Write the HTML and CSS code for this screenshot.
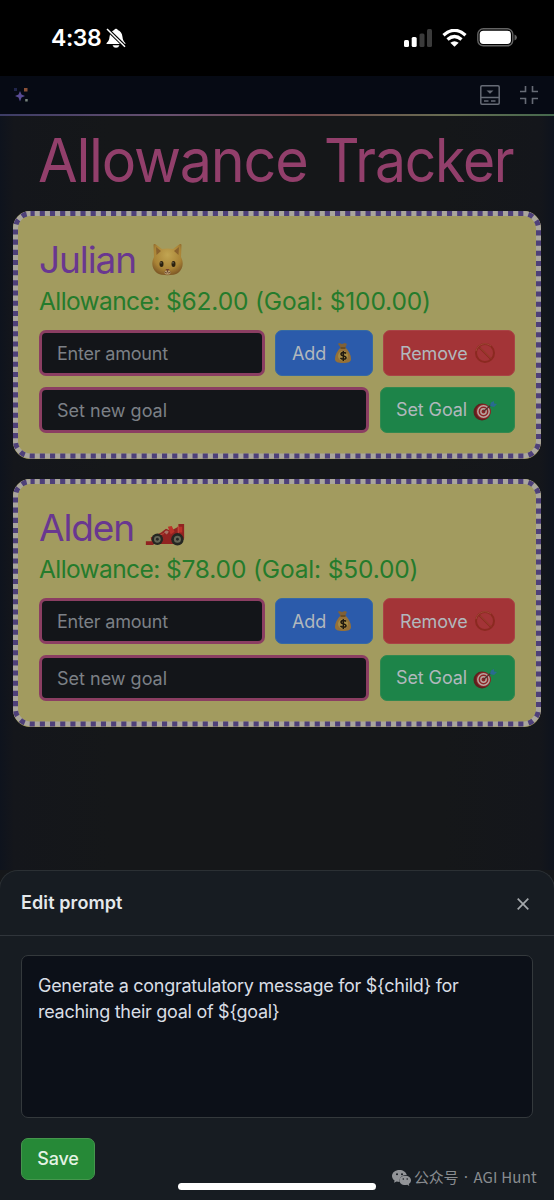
FILE: index.html
```
<!DOCTYPE html>
<html lang="en">
<head>
<meta charset="utf-8">
<title>Allowance Tracker</title>
<link rel="stylesheet" href="styles.css">
</head>
<body>
<svg class="defs" width="0" height="0" aria-hidden="true">
  <defs>
    <radialGradient id="fur" cx=".5" cy=".35" r=".7"><stop offset="0" stop-color="#c1a552"/><stop offset=".65" stop-color="#a98336"/><stop offset="1" stop-color="#765022"/></radialGradient>
    <symbol id="bag" viewBox="0 0 18 22">
      <path d="M5 1l3 1 3-1 2 1-2 4H7L4 2z" fill="#806137"/>
      <path d="M7 5C3 9 1 13 1 17c0 3 3 4 8 4s8-1 8-4c0-4-2-8-6-12z" fill="#957038"/>
      <path d="M6.500 6h5" stroke="#5b421d" stroke-width="1.500"/>
      <circle cx="9" cy="14" r="5" fill="#a68b45"/>
      <path d="M12 11.500c-1-1.500-5-1.500-5 .7 0 2.300 5 1 5 3.500 0 2-4.500 2-5.500.2M9.300 9v10" fill="none" stroke="#20190f" stroke-width="1.500"/>
    </symbol>
    <symbol id="ban" viewBox="0 0 22 22">
      <circle cx="11" cy="11" r="9" fill="none" stroke="#8b2920" stroke-width="2"/>
      <path d="M5 5l12 12" stroke="#8b2920" stroke-width="2"/>
      <path d="M2 9a9.200 9.200 0 0 1 15-5M6 5.500l11 11" fill="none" stroke="#a5543c" stroke-width=".7"/>
    </symbol>
    <symbol id="target" viewBox="0 0 24 20">
      <circle cx="9" cy="11" r="8.500" fill="#5e201f"/>
      <circle cx="10.500" cy="10.500" r="7.500" fill="#8e2526"/>
      <circle cx="10.500" cy="10.500" r="5.700" fill="none" stroke="#b7a8a2" stroke-width="1.500"/>
      <circle cx="10.500" cy="10.500" r="2.700" fill="none" stroke="#b7a8a2" stroke-width="1.400"/>
      <path d="M10.500 10.500L18 4" stroke="#4d302e" stroke-width="1.200"/>
      <path d="M17 5l1-3.500L21 0v2.500l3 .5-3 3z" fill="#296b91"/>
    </symbol>
    <symbol id="cat" viewBox="0 0 31 34">
      <path d="M1.500 2c0-1 1-1.500 2-.7l6.500 4.700c3-.7 8-.7 11 0l6.500-4.700c1-.8 2-.3 2 .7L29 14c3 6 2 12-3 16-4 3-17 3-21 0-5-4-6-10-3-16z" fill="url(#fur)"/>
      <path d="M4 4l5 4-4.500 4zM27 4l-5 4 4.500 4z" fill="#8a622d"/>
      <ellipse cx="9.500" cy="21" rx="2" ry="3" fill="#29200f"/><ellipse cx="21.500" cy="21" rx="2" ry="3" fill="#29200f"/>
      <circle cx="9" cy="19.800" r=".6" fill="#b5a98b"/><circle cx="21" cy="19.800" r=".6" fill="#b5a98b"/>
      <ellipse cx="15.500" cy="29.500" rx="3" ry="2" fill="#b69c71"/>
      <path d="M13.300 26h4.400l-2.200 2.200z" fill="#713e2e"/><path d="M15.500 27.500v1.500m-3 0q2 2 3 0 1 2 3 0" fill="none" stroke="#69442c" stroke-width=".9"/>
    </symbol>
    <symbol id="car" viewBox="0 0 40 23">
      <path d="M0 18h8v4H0zM5 14l11-5 5-4 5 2 8-4V0h6v15l-4 6H7z" fill="#912321"/>
      <path d="M33 3h5v6h-5zM23 3l4-1 3 6-4 3z" fill="#ba3128"/>
      <path d="M19 9q2-4 5-1l-2 3z" fill="#a77364"/><path d="M7 14l12-4M34 2v8" stroke="#b84b3e" stroke-width="1"/>
      <circle cx="12" cy="16" r="6" fill="#252722"/><circle cx="12" cy="16" r="3.500" fill="#656657"/><circle cx="12" cy="16" r="1.500" fill="#272825"/>
      <circle cx="33" cy="16" r="6.500" fill="#252722"/><circle cx="33" cy="16" r="3.700" fill="#656657"/><circle cx="33" cy="16" r="1.500" fill="#272825"/>
    </symbol>
  </defs>
</svg>
<div class="phone">
  <header class="status">
    <div class="clock"><span class="time">4:38</span>
      <svg width="20" height="20" viewBox="0 0 20 20"><path d="M.5 16c0-2 2.500-2 3-7C4 5 5.500 3 8.200 2a2 2 0 0 1 3.600 0C14.500 3 16 5 16.500 9c.5 5 3 5 3 7zM6.500 17.200h7q-1 2.500-3.500 2.500t-3.500-2.500z" fill="#fff"/><path d="M.5.500L19.500 19" stroke="#000" stroke-width="3.600"/><path d="M1 1L19 18.800" stroke="#fff" stroke-width="1.500"/></svg>
    </div>
    <div class="signals">
      <svg width="28" height="18" viewBox="0 0 28 18"><rect x="0" y="11" width="5" height="7" rx="1.500" fill="#fff"/><rect x="7.700" y="8" width="5" height="10" rx="1.500" fill="#fff"/><rect x="15.500" y="4.500" width="5" height="13.500" rx="1.500" fill="#3b3b3b"/><rect x="23" y="0" width="5" height="18" rx="1.500" fill="#3b3b3b"/></svg>
      <svg width="25" height="18" viewBox="0 0 25 18"><path d="M1.500 6.200Q12.500-3.500 23.500 6.200M5.500 10.500q7-6 14 0" fill="none" stroke="#fff" stroke-width="3.300"/><path d="M8.300 13.800q4.200-3.300 8.400 0L12.500 17.700z" fill="#fff"/></svg>
      <svg width="40" height="19" viewBox="0 0 40 19"><rect x=".8" y=".8" width="35" height="17" rx="5.500" fill="none" stroke="#636363" stroke-width="1.400"/><rect x="2.700" y="2.700" width="31.200" height="13.200" rx="3.700" fill="#fff"/><path d="M37.500 6.500q2.500 1 2.500 3t-2.500 3z" fill="#636363"/></svg>
    </div>
  </header>
  <nav class="toolbar">
    <svg width="17" height="17" viewBox="0 0 17 17"><path d="M7 4l1.500 3.500L12 9l-3.500 1.500L7 14.500l-1.500-4L2 9l3.500-1.500z" fill="#594b94"/><path d="M1 1h3v3H1z" fill="#20254b"/><path d="M11 1h3.500v3.500H11z" fill="#8a5037"/><path d="M12.200 12h2.500v2.500h-2.500z" fill="#77837c"/></svg>
    <div class="tools">
      <svg width="20" height="20" viewBox="0 0 20 20" fill="none" stroke="#666b75" stroke-width="1.500"><rect x=".8" y=".8" width="18.400" height="18.400" rx="1.200"/><path d="M1 12.500h18M4 16h4.500m2.500 0h4.500"/><path d="M6.500 5.500h7L10 8.700z" fill="#666b75" stroke="none"/></svg>
      <svg width="18" height="18" viewBox="0 0 18 18" fill="none" stroke="#666b75" stroke-width="1.600"><path d="M5.500 0v5.500H0M12.500 0v5.500H18M5.500 18v-5.500H0M12.500 18v-5.500H18"/></svg>
    </div>
  </nav>
  <main class="app">
    <h1 class="title"><span class="word-allowance">Allowance</span> <span class="word-tracker">Tracker</span></h1>
    <section class="card">
      <svg class="edge" width="528" height="248"><rect class="edge-base" x="2.500" y="2.500" width="523" height="242.500" rx="15"/><rect class="edge-dash" x="2.500" y="2.500" width="523" height="242.500" rx="15"/></svg>
      <h2 class="name"><span class="julian">Julian</span><svg width="31" height="34"><use href="#cat"/></svg></h2>
      <p class="balance">Allowance: <span class="figures">$62.00 (Goal: $100.00)</span></p>
      <div class="row"><div class="field amount">Enter amount</div><div class="btn add">Add<svg width="18" height="22"><use href="#bag"/></svg></div><div class="btn remove">Remove<svg width="22" height="22"><use href="#ban"/></svg></div></div>
      <div class="row"><div class="field">Set new goal</div><div class="btn goal">Set Goal<svg width="24" height="20"><use href="#target"/></svg></div></div>
    </section>
    <section class="card">
      <svg class="edge" width="528" height="248"><rect class="edge-base" x="2.500" y="2.500" width="523" height="242.500" rx="15"/><rect class="edge-dash" x="2.500" y="2.500" width="523" height="242.500" rx="15"/></svg>
      <h2 class="name"><span class="alden">Alden</span><svg class="racer" width="40" height="22"><use href="#car"/></svg></h2>
      <p class="balance">Allowance: <span class="figures">$78.00 (Goal: $50.00)</span></p>
      <div class="row"><div class="field amount">Enter amount</div><div class="btn add">Add<svg width="18" height="22"><use href="#bag"/></svg></div><div class="btn remove">Remove<svg width="22" height="22"><use href="#ban"/></svg></div></div>
      <div class="row"><div class="field">Set new goal</div><div class="btn goal">Set Goal<svg width="24" height="20"><use href="#target"/></svg></div></div>
    </section>
  </main>
  <section class="sheet">
    <header class="sheet-head"><span class="sheet-title">Edit prompt</span><svg width="12" height="12" viewBox="0 0 12 12"><path d="M.7.7l10.600 10.600M11.300.7L.7 11.300" stroke="#a4a8ac" stroke-width="1.700"/></svg></header>
    <div class="sheet-body">
      <div class="prompt">Generate a congratulatory message for ${child} for<br>reaching their goal of ${goal}</div>
      <div class="save">Save</div>
    </div>
  </section>
  <div class="home"></div>
  <div class="credit"><svg width="19" height="16" viewBox="0 0 19 16"><path d="M7.500 0C3.300 0 0 2.600 0 6c0 1.900 1 3.500 2.600 4.600L2 12.800l2.600-1.300q1.400.4 2.900.4C7 7.500 10.500 4.800 14.800 5 14 2 11 0 7.500 0z" fill="#929498"/><path d="M13.200 5.700c-3.300 0-5.700 2.100-5.700 4.700s2.400 4.700 5.700 4.700q1 0 2-.3l2.100 1.100-.5-1.900c1.300-.9 2.200-2.100 2.200-3.600 0-2.600-2.500-4.700-5.800-4.700z" fill="#929498"/><g fill="#171b22"><circle cx="5" cy="4.200" r="1"/><circle cx="10" cy="4.200" r="1"/><circle cx="11.300" cy="9" r=".8"/><circle cx="15.200" cy="9" r=".8"/></g></svg><span class="cn">公众号</span><span class="dot">·</span><span class="en">AGI Hunt</span></div>
</div>
</body>
</html>
```
FILE: styles.css
```
* { box-sizing: border-box; }
body { margin: 0; background: #15171a; font-family: Inter, "Noto Sans CJK SC", sans-serif; }
.defs { position: absolute; }
svg { display: block; flex: none; }
.phone { position: relative; width: 554px; height: 1200px; overflow: hidden; display: flex; flex-direction: column; }
.status { height: 76px; flex: none; background: #000; color: #fff; display: flex; justify-content: space-between; padding: 28px 37px 0 51px; }
.clock { display: flex; gap: 5px; height: 20px; align-items: center; }
.time { font-size: 23px; font-weight: 600; letter-spacing: -0.4px; line-height: 20px; }
.signals { display: flex; gap: 10px; height: 19px; align-items: center; }
.toolbar { height: 40px; flex: none; background: linear-gradient(90deg, #3c3c65, #67506f 30%, #71494d 55%, #686c52 80%, #45694d) bottom / 100% 2px no-repeat, #060a14; display: flex; justify-content: space-between; align-items: center; padding: 0 16px 2px 13px; }
.tools { display: flex; align-items: center; gap: 20px; }
.app { flex: none; height: 754px; padding: 0 13px; background: linear-gradient(90deg, #0e131d, #14161b 2.5%, #151719 20%, #151719 80%, #14161b 97.5%, #0e131d); }
.title { margin: 0 0 7px; height: 88px; line-height: 88px; font-size: 60.5px; font-weight: 400; color: #923f6b; letter-spacing: -1.3px; padding-left: 25px; white-space: nowrap; display: flex; }
.title span { flex: none; transform-origin: left; }
.word-allowance { width: 286px; transform: scaleX(.95); }
.word-tracker { width: 206px; transform: scaleX(.912); }
.card { position: relative; height: 247.5px; margin-bottom: 20.5px; border-radius: 17px; background: #a29b5f; padding: 28px 26px 0 26px; }
.edge { position: absolute; left: 0; top: 0; }
.edge rect { fill: none; stroke-width: 5px; }
.edge-base { stroke: #aaa69d; }
.edge-dash { stroke: #4e4079; stroke-dasharray: 5.09 5.09; stroke-dashoffset: .9px; }
.name { margin: 0; height: 41px; display: flex; align-items: center; font-size: 37px; font-weight: 400; line-height: 41px; color: #693790; white-space: nowrap; gap: 16px; }
.julian, .alden { letter-spacing: -1.1px; }
.alden + .racer { margin: 15px 0 0 -5px; }
.balance { margin: 0 0 8px; height: 42px; line-height: 42px; font-size: 24.5px; letter-spacing: -.6px; color: #257b2c; white-space: nowrap; }
.figures { letter-spacing: -.15px; }
.row { display: flex; gap: 10.5px; height: 46px; margin-bottom: 10.5px; }
.field { flex: 1; border: 3px solid #8b3e62; border-radius: 7px; background: #131519; color: #7c8086; padding-left: 15px; font-size: 18px; line-height: 41px; white-space: nowrap; }
.amount { letter-spacing: -.2px; }
.btn { border-radius: 7px; display: flex; align-items: center; justify-content: space-between; font-size: 18px; letter-spacing: -.1px; color: #b1b8bd; white-space: nowrap; }
.add { width: 97.5px; padding: 0 20px 0 16px; background: #2b5bab; border: 1px solid #3569a4; }
.remove { width: 132px; padding: 0 18px 0 16px; background: #a33437; border: 1px solid #a94346; }
.goal { width: 135.5px; padding: 0 17px 0 15.5px; background: #1d8449; border: 1px solid #32884f; }
.goal svg { margin-top: 3px; }
.sheet { flex: none; height: 330px; margin: 0 -1px; border: 1.5px solid #2b3034; border-bottom: 0; border-radius: 19px 19px 0 0; background: #171c22; }
.sheet-head { height: 65px; border-bottom: 1px solid #30353b; display: flex; align-items: center; justify-content: space-between; padding: 0 25px 0 21px; }
.sheet-title { font-size: 18px; font-weight: 600; color: #e4e8eb; letter-spacing: .1px; }
.sheet-head .sheet-title { margin-top: -2px; }
.sheet-head svg { margin-top: 2px; }
.sheet-body { padding: 19px 21px; }
.prompt { height: 163px; border: 1px solid #34393c; border-radius: 7px; background: #0c1018; color: #d9dee5; padding: 17px 16px; font-size: 18px; line-height: 26px; letter-spacing: -.28px; white-space: nowrap; }
.save { margin-top: 20px; width: 74px; height: 42px; border: 1px solid #45964d; border-radius: 7px; background: #268937; color: #e4f3e4; font-size: 18px; font-weight: 500; letter-spacing: -.2px; line-height: 40px; text-align: center; }
.home { position: absolute; left: 178px; top: 1183px; width: 198px; height: 7px; border-radius: 4px; background: #fff; }
.credit { position: absolute; left: 392px; top: 1168px; height: 20px; display: flex; align-items: center; color: #898c90; font: 15px/20px "Noto Sans CJK SC", sans-serif; white-space: nowrap; }
.credit span { margin-top: -2px; }
.cn { margin-left: 3px; letter-spacing: -.2px; }
.dot { width: 15px; text-align: center; font-family: Inter, sans-serif; }
.en { letter-spacing: .2px; }
```
